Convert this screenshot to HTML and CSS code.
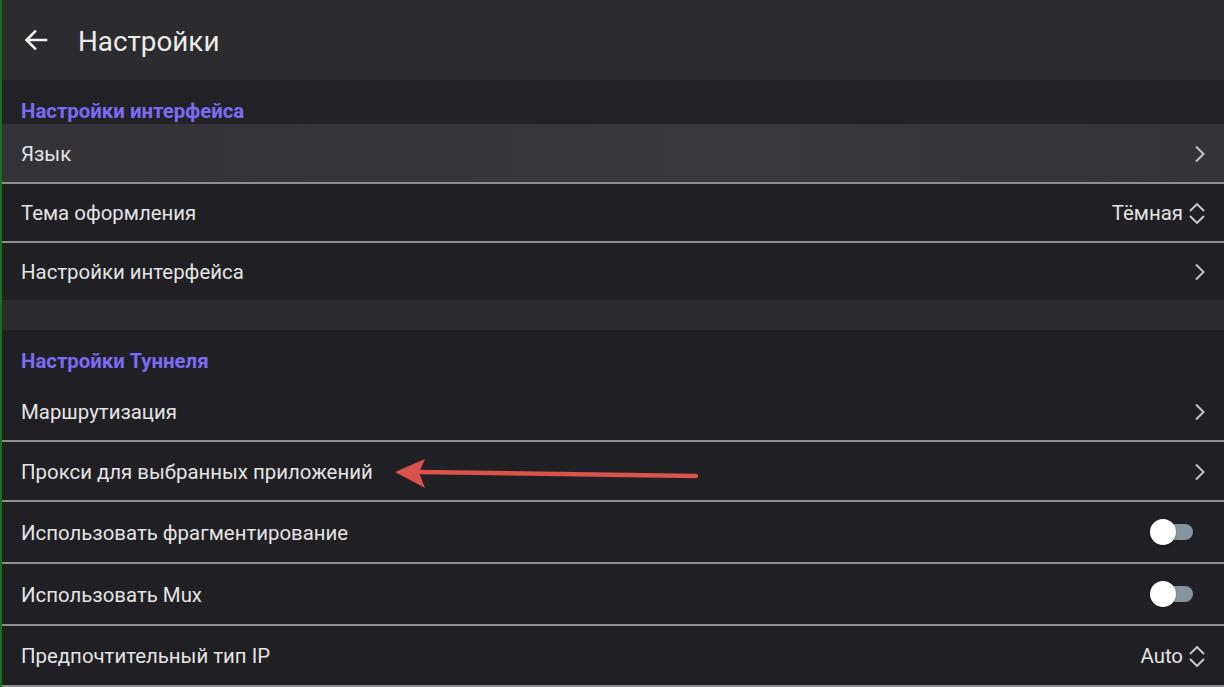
FILE: index.html
```html
<!DOCTYPE html>
<html lang="ru">
<head>
<meta charset="utf-8">
<title>Настройки</title>
<link rel="stylesheet" href="styles.css">
</head>
<body>
<div class="screen">
  <header class="app-bar">
    <svg class="back" width="24" height="22" viewBox="0 0 24 22"><path d="M22 11 H3 M11 2.5 L2.5 11 L11 19.5" fill="none" stroke="#f2f2f2" stroke-width="2.6" stroke-linecap="square"/></svg>
    <h1 class="app-title">Настройки</h1>
  </header>

  <div class="section-title first">Настройки интерфейса</div>
  <div class="row focused h58"><span class="label">Язык</span><svg class="chev" width="13" height="20" viewBox="0 0 13 20"><path d="M3 2.5 L10.5 10 L3 17.5" fill="none" stroke="#c4c4c4" stroke-width="2"/></svg></div>
  <div class="row h57"><span class="label">Тема оформления</span><span class="value">Тёмная<svg class="updown" width="18" height="23" viewBox="0 0 18 23"><path d="M2 9 L9 2 L16 9 M2 14 L9 21 L16 14" fill="none" stroke="#d0d0d0" stroke-width="1.8"/></svg></span></div>
  <div class="row h57 last"><span class="label">Настройки интерфейса</span><svg class="chev" width="13" height="20" viewBox="0 0 13 20"><path d="M3 2.5 L10.5 10 L3 17.5" fill="none" stroke="#c4c4c4" stroke-width="2"/></svg></div>

  <div class="gap"></div>

  <div class="section-title second">Настройки Туннеля</div>
  <div class="row h58"><span class="label">Маршрутизация</span><svg class="chev" width="13" height="20" viewBox="0 0 13 20"><path d="M3 2.5 L10.5 10 L3 17.5" fill="none" stroke="#c4c4c4" stroke-width="2"/></svg></div>
  <div class="row h58"><span class="label">Прокси для выбранных приложений</span><svg class="chev" width="13" height="20" viewBox="0 0 13 20"><path d="M3 2.5 L10.5 10 L3 17.5" fill="none" stroke="#c4c4c4" stroke-width="2"/></svg></div>
  <div class="row h60"><span class="label">Использовать фрагментирование</span><span class="switch"><span class="track"></span><span class="knob"></span></span></div>
  <div class="row h60"><span class="label">Использовать Mux</span><span class="switch"><span class="track"></span><span class="knob"></span></span></div>
  <div class="row h59"><span class="label">Предпочтительный тип IP</span><span class="value">Auto<svg class="updown" width="18" height="23" viewBox="0 0 18 23"><path d="M2 9 L9 2 L16 9 M2 14 L9 21 L16 14" fill="none" stroke="#d0d0d0" stroke-width="1.8"/></svg></span></div>

  <svg class="pointer" width="320" height="40" viewBox="0 0 320 40"><path d="M28 19 L304 23" stroke="#d9534a" stroke-width="4.5" stroke-linecap="round"/><path d="M3 19 L33 6 L27 19.5 L33 35 Z" fill="#d9534a"/></svg>
</div>
</body>
</html>
```

FILE: styles.css
```css
html, body {
  margin: 0;
  padding: 0;
  background: #201f23;
}

body {
  font-family: Roboto, "Noto Sans", sans-serif;
  color: #e4e4e4;
}

.screen {
  position: relative;
  width: 1224px;
  height: 687px;
  overflow: hidden;
  box-sizing: border-box;
  border-left: 2px solid #1f6e1f;
  background: #201f23;
}

.app-bar {
  height: 80px;
  display: flex;
  align-items: center;
  background: #2c2b2e;
  padding-left: 22px;
  box-sizing: border-box;
}

.back {
  display: block;
}

.app-title {
  margin: 3px 0 0 30px;
  font-size: 27.8px;
  font-weight: 400;
  color: #ececec;
}

.section-title {
  padding-left: 19px;
  font-size: 20.4px;
  font-weight: 700;
  line-height: 24px;
  color: #7b6cf3;
  background: #222125;
}

.section-title.first {
  padding-top: 19px;
  padding-bottom: 1px;
}

.section-title.second {
  padding-top: 19px;
  padding-bottom: 9px;
  background: #201f23;
}

.row {
  display: flex;
  align-items: center;
  justify-content: space-between;
  padding: 0 18px 0 19px;
  border-bottom: 2px solid #8e8e8e;
  font-size: 20.4px;
  color: #e4e4e4;
}

.row.last {
  border-bottom: none;
}

.h57 { height: 57px; }
.h58 { height: 58px; }
.h59 { height: 59px; }
.h60 { height: 60px; }

.row.focused {
  background: linear-gradient(90deg, #333236 0%, #38373b 60%, #343337 100%);
}

.label {
  line-height: 24px;
  padding-top: 1px;
}

.chev {
  display: block;
  margin-top: 1px;
}

.value {
  display: flex;
  align-items: center;
  gap: 5px;
  padding-top: 1px;
}

.updown {
  display: block;
}

.switch {
  position: relative;
  width: 43px;
  height: 26px;
  margin-right: 13px;
}

.track {
  position: absolute;
  left: 6px;
  top: 5px;
  width: 37px;
  height: 16px;
  border-radius: 8px;
  background: #85949f;
}

.knob {
  position: absolute;
  left: 0;
  top: 0;
  width: 26px;
  height: 26px;
  border-radius: 50%;
  background: #ffffff;
  box-shadow: 0 1px 2px rgba(0, 0, 0, 0.3);
}

.gap {
  height: 30px;
  background: #2c2b2e;
}

.pointer {
  position: absolute;
  left: 390px;
  top: 453px;
}
```
